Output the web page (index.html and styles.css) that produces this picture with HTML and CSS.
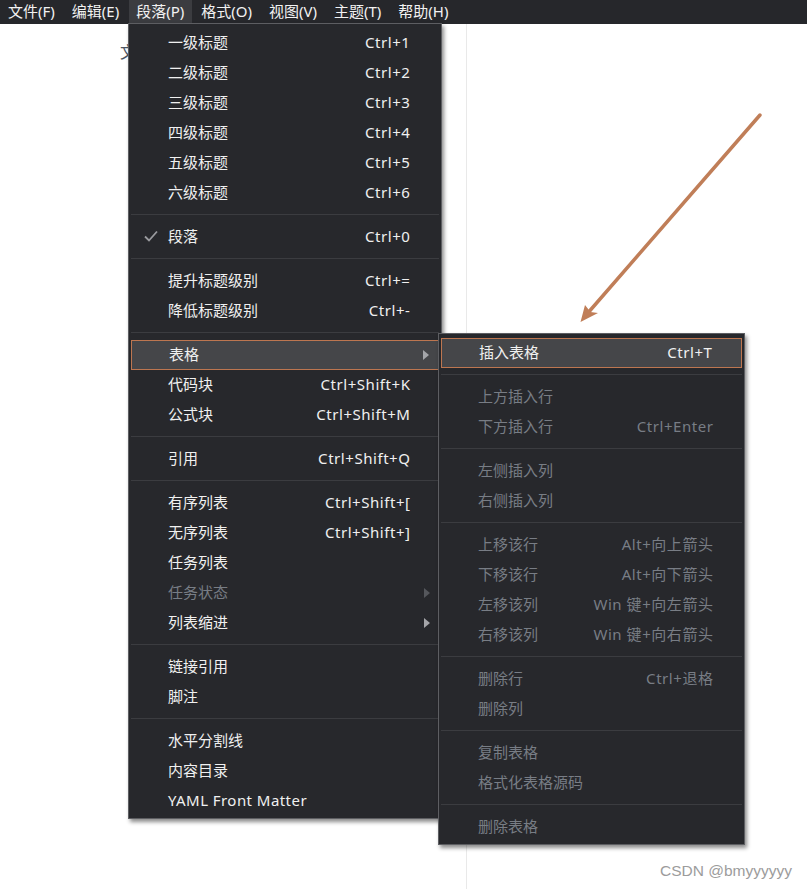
FILE: index.html
```html
<!DOCTYPE html>
<html lang="zh-CN">
<head>
<meta charset="utf-8">
<title>Typora 段落菜单</title>
<link rel="stylesheet" href="styles.css">
</head>
<body>
<div class="menubar">
  <div class="mb-item">文件(F)</div>
  <div class="mb-item">编辑(E)</div>
  <div class="mb-item active">段落(P)</div>
  <div class="mb-item">格式(O)</div>
  <div class="mb-item">视图(V)</div>
  <div class="mb-item">主题(T)</div>
  <div class="mb-item">帮助(H)</div>
</div>
<div class="page">
  <div class="editor"><p class="doc-text">文本</p></div>
  <div class="side"></div>
</div>

<div class="menu main-menu">
  <div class="item"><span class="label">一级标题</span><span class="key">Ctrl+1</span></div>
  <div class="item"><span class="label">二级标题</span><span class="key">Ctrl+2</span></div>
  <div class="item"><span class="label">三级标题</span><span class="key">Ctrl+3</span></div>
  <div class="item"><span class="label">四级标题</span><span class="key">Ctrl+4</span></div>
  <div class="item"><span class="label">五级标题</span><span class="key">Ctrl+5</span></div>
  <div class="item"><span class="label">六级标题</span><span class="key">Ctrl+6</span></div>
  <div class="sep"></div>
  <div class="item"><span class="label"><svg class="check" width="14" height="12" viewBox="0 0 14 12"><path d="M1 6.5 L5 10.5 L13 1.5" fill="none" stroke="#9a9b9f" stroke-width="1.8"/></svg>段落</span><span class="key">Ctrl+0</span></div>
  <div class="sep"></div>
  <div class="item"><span class="label">提升标题级别</span><span class="key">Ctrl+=</span></div>
  <div class="item"><span class="label">降低标题级别</span><span class="key">Ctrl+-</span></div>
  <div class="sep"></div>
  <div class="item hl"><span class="label">表格</span><span class="arrow"></span></div>
  <div class="item"><span class="label">代码块</span><span class="key">Ctrl+Shift+K</span></div>
  <div class="item"><span class="label">公式块</span><span class="key">Ctrl+Shift+M</span></div>
  <div class="sep"></div>
  <div class="item"><span class="label">引用</span><span class="key">Ctrl+Shift+Q</span></div>
  <div class="sep"></div>
  <div class="item"><span class="label">有序列表</span><span class="key">Ctrl+Shift+[</span></div>
  <div class="item"><span class="label">无序列表</span><span class="key">Ctrl+Shift+]</span></div>
  <div class="item"><span class="label">任务列表</span></div>
  <div class="item disabled"><span class="label">任务状态</span><span class="arrow"></span></div>
  <div class="item"><span class="label">列表缩进</span><span class="arrow"></span></div>
  <div class="sep"></div>
  <div class="item"><span class="label">链接引用</span></div>
  <div class="item"><span class="label">脚注</span></div>
  <div class="sep"></div>
  <div class="item"><span class="label">水平分割线</span></div>
  <div class="item"><span class="label">内容目录</span></div>
  <div class="item"><span class="label latin">YAML Front Matter</span></div>
</div>

<div class="menu sub-menu">
  <div class="item hl"><span class="label">插入表格</span><span class="key">Ctrl+T</span></div>
  <div class="sep"></div>
  <div class="item disabled"><span class="label">上方插入行</span></div>
  <div class="item disabled"><span class="label">下方插入行</span><span class="key">Ctrl+Enter</span></div>
  <div class="sep"></div>
  <div class="item disabled"><span class="label">左侧插入列</span></div>
  <div class="item disabled"><span class="label">右侧插入列</span></div>
  <div class="sep"></div>
  <div class="item disabled"><span class="label">上移该行</span><span class="key">Alt+向上箭头</span></div>
  <div class="item disabled"><span class="label">下移该行</span><span class="key">Alt+向下箭头</span></div>
  <div class="item disabled"><span class="label">左移该列</span><span class="key">Win 键+向左箭头</span></div>
  <div class="item disabled"><span class="label">右移该列</span><span class="key">Win 键+向右箭头</span></div>
  <div class="sep"></div>
  <div class="item disabled"><span class="label">删除行</span><span class="key">Ctrl+退格</span></div>
  <div class="item disabled"><span class="label">删除列</span></div>
  <div class="sep"></div>
  <div class="item disabled"><span class="label">复制表格</span></div>
  <div class="item disabled"><span class="label">格式化表格源码</span></div>
  <div class="sep"></div>
  <div class="item disabled"><span class="label">删除表格</span></div>
</div>

<svg class="annotation" width="807" height="889" viewBox="0 0 807 889">
  <line x1="760" y1="115" x2="587" y2="314" stroke="#c07e58" stroke-width="3.5" stroke-linecap="round"/>
  <polygon points="580.5,322 585,305 590.5,312 598,313" fill="#c07e58"/>
</svg>

<div class="watermark">CSDN @bmyyyyyy</div>
</body>
</html>
```

FILE: styles.css
```css
html, body {
  margin: 0;
  padding: 0;
}
body {
  width: 807px;
  height: 889px;
  overflow: hidden;
  background: #ffffff;
  font-family: "Noto Sans", "Noto Sans CJK SC", sans-serif;
  position: relative;
}

.menubar {
  display: flex;
  height: 24px;
  background: #26272b;
  color: #f2f2f2;
  font-size: 15px;
  line-height: 22px;
}
.mb-item {
  padding: 0 8.5px 2px;
}
.mb-item:first-child {
  padding-left: 8px;
}
.mb-item.active {
  background: #3b3c40;
  padding: 0 7.5px 2px;
  margin-left: 1px;
  margin-right: 1px;
}

.page {
  display: flex;
  height: 865px;
}
.editor {
  width: 467px;
  border-right: 1px solid #e9e9e9;
  box-sizing: border-box;
}
.doc-text {
  margin: 0;
  padding: 15px 0 0 120px;
  font-size: 16px;
  color: #4b5563;
  font-family: "Noto Sans CJK SC", sans-serif;
}
.side {
  flex: 1;
}

.menu {
  position: absolute;
  box-sizing: border-box;
  background: #27282c;
  border: 1px solid #5d5e62;
  box-shadow: 2px 3px 4px rgba(0, 0, 0, 0.45);
  padding: 4px 0 2px;
  color: #f0f0f0;
  font-size: 15px;
}
.main-menu {
  left: 128px;
  top: 23px;
  width: 314px;
  z-index: 2;
}
.sub-menu {
  left: 438px;
  top: 333px;
  width: 307px;
  z-index: 3;
}

.item {
  display: flex;
  align-items: center;
  height: 30px;
  box-sizing: border-box;
  margin: 0 2px;
  padding: 0 29px 3px 37px;
  white-space: nowrap;
}
.label {
  flex: 1;
  display: flex;
  align-items: center;
}
.latin {
  letter-spacing: 0.45px;
}
.key {
  flex: none;
  letter-spacing: 0.55px;
  margin-right: -0.5px;
}
.check {
  margin-left: -24px;
  margin-right: 10px;
}
.arrow {
  width: 0;
  height: 0;
  border-top: 5px solid transparent;
  border-bottom: 5px solid transparent;
  border-left: 6px solid #a4a5a9;
  margin-right: -20px;
  margin-top: 3px;
}
.item.disabled {
  color: #787d85;
}
.item.disabled .arrow {
  border-left-color: #55575c;
}
.item.hl {
  background: #454649;
  border: 1px solid #bd7650;
}

.sep {
  height: 0;
  border-top: 1px solid #3b3c40;
  margin: 6px 2px 7px;
}

.annotation {
  position: absolute;
  left: 0;
  top: 0;
  z-index: 4;
  pointer-events: none;
}

.watermark {
  position: absolute;
  right: 15px;
  bottom: 9px;
  font-size: 15.5px;
  color: #9c9c9c;
  font-family: "Liberation Sans", sans-serif;
}
```
